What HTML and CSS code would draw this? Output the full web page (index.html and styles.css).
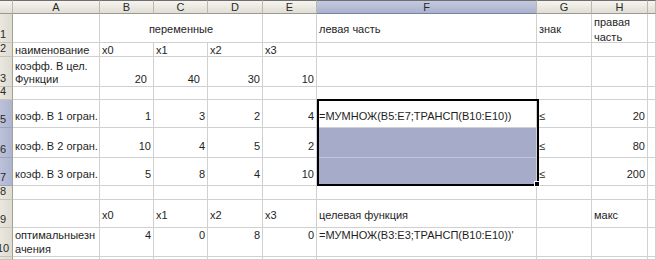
FILE: index.html
```html
<!DOCTYPE html>
<html lang="ru">
<head>
<meta charset="utf-8">
<title>Лист</title>
<link rel="stylesheet" href="styles.css">
</head>
<body>
<div class="sheet">
  <div class="row hd">
    <div class="c corner"></div>
    <div class="c">A</div>
    <div class="c">B</div>
    <div class="c">C</div>
    <div class="c">D</div>
    <div class="c">E</div>
    <div class="c sel">F</div>
    <div class="c">G</div>
    <div class="c">H</div>
    <div class="c"></div>
  </div>
  <div class="row r1">
    <div class="c rh"><span>1</span></div>
    <div class="c"></div>
    <div class="c span3">переменные</div>
    <div class="c"></div>
    <div class="c">левая часть</div>
    <div class="c">знак</div>
    <div class="c wrap">правая часть</div>
    <div class="c"></div>
  </div>
  <div class="row r2">
    <div class="c rh"><span>2</span></div>
    <div class="c">наименование</div>
    <div class="c">x0</div>
    <div class="c">x1</div>
    <div class="c">x2</div>
    <div class="c">x3</div>
    <div class="c"></div>
    <div class="c"></div>
    <div class="c"></div>
    <div class="c"></div>
  </div>
  <div class="row r3">
    <div class="c rh"><span>3</span></div>
    <div class="c wrap">коэфф. В цел. Функции</div>
    <div class="c n pr-b">20</div>
    <div class="c n pr-c">40</div>
    <div class="c n">30</div>
    <div class="c n">10</div>
    <div class="c"></div>
    <div class="c"></div>
    <div class="c"></div>
    <div class="c"></div>
  </div>
  <div class="row r4">
    <div class="c rh"><span>4</span></div>
    <div class="c"></div>
    <div class="c"></div>
    <div class="c"></div>
    <div class="c"></div>
    <div class="c"></div>
    <div class="c"></div>
    <div class="c"></div>
    <div class="c"></div>
    <div class="c"></div>
  </div>
  <div class="row r5">
    <div class="c rh sel"><span>5</span></div>
    <div class="c">коэф. В 1 огран.</div>
    <div class="c n">1</div>
    <div class="c n">3</div>
    <div class="c n">2</div>
    <div class="c n">4</div>
    <div class="c active">=МУМНОЖ(B5:E7;ТРАНСП(B10:E10))<div class="selbox"><div class="handle"></div></div></div>
    <div class="c">≤</div>
    <div class="c n">20</div>
    <div class="c"></div>
  </div>
  <div class="row r6">
    <div class="c rh sel"><span>6</span></div>
    <div class="c">коэф. В 2 огран.</div>
    <div class="c n">10</div>
    <div class="c n">4</div>
    <div class="c n">5</div>
    <div class="c n">2</div>
    <div class="c fsel"></div>
    <div class="c">≤</div>
    <div class="c n">80</div>
    <div class="c"></div>
  </div>
  <div class="row r7">
    <div class="c rh sel"><span>7</span></div>
    <div class="c">коэф. В 3 огран.</div>
    <div class="c n">5</div>
    <div class="c n">8</div>
    <div class="c n">4</div>
    <div class="c n">10</div>
    <div class="c fsel"></div>
    <div class="c">≤</div>
    <div class="c n">200</div>
    <div class="c"></div>
  </div>
  <div class="row r8">
    <div class="c rh"><span>8</span></div>
    <div class="c"></div>
    <div class="c"></div>
    <div class="c"></div>
    <div class="c"></div>
    <div class="c"></div>
    <div class="c"></div>
    <div class="c"></div>
    <div class="c"></div>
    <div class="c"></div>
  </div>
  <div class="row r9">
    <div class="c rh"><span>9</span></div>
    <div class="c"></div>
    <div class="c">x0</div>
    <div class="c">x1</div>
    <div class="c">x2</div>
    <div class="c">x3</div>
    <div class="c">целевая функция</div>
    <div class="c"></div>
    <div class="c">макс</div>
    <div class="c"></div>
  </div>
  <div class="row r10">
    <div class="c rh"><span>10</span></div>
    <div class="c wrap">оптимальныезн<br>ачения</div>
    <div class="c n">4</div>
    <div class="c n">0</div>
    <div class="c n">8</div>
    <div class="c n">0</div>
    <div class="c">=МУМНОЖ(B3:E3;ТРАНСП(B10:E10))'</div>
    <div class="c"></div>
    <div class="c"></div>
    <div class="c"></div>
  </div>
  <div class="row r11">
    <div class="c rh"><span>11</span></div>
    <div class="c"></div>
    <div class="c"></div>
    <div class="c"></div>
    <div class="c"></div>
    <div class="c"></div>
    <div class="c"></div>
    <div class="c"></div>
    <div class="c"></div>
    <div class="c"></div>
  </div>
</div>
</body>
</html>
```

FILE: styles.css
```css
* { box-sizing: border-box; }
html, body { margin: 0; height: 100%; }
body {
  background: #fff;
  font-family: "Liberation Sans", Arial, sans-serif;
  font-size: 11px;
  color: #1e1e1e;
  overflow: hidden;
}
.sheet {
  display: grid;
  grid-template-columns: 13px 87px 54px 54px 55px 54px 220px 55px 56px 8px;
  grid-template-rows: 14px 29px 14px 30px 13px 28px 30px 28px 14px 28px 29px 3px;
  width: 656px;
  height: 260px;
  overflow: hidden;
}
.row { display: contents; }
.c {
  display: flex;
  align-items: flex-end;
  padding: 0 2px;
  border-right: 1px solid #d0d0d0;
  border-bottom: 1px solid #d0d0d0;
  white-space: nowrap;
  line-height: 14px;
  min-width: 0;
}
.n { justify-content: flex-end; }
.span3 { grid-column: span 3; justify-content: center; }
.wrap { white-space: normal; }
.pr-b { padding-right: 6px; }
.pr-c { padding-right: 7px; }

/* header row */
.hd .c {
  background: linear-gradient(#f5f4ef, #e0ded4);
  border-top: 1px solid #6e6e6e;
  border-right: 1px solid #bbb9ad;
  border-bottom: 1px solid #9c9a8e;
  justify-content: center;
  align-items: center;
  color: #2a2a2a;
  line-height: 12px;
  padding: 0;
}
.hd .sel {
  background: linear-gradient(#c4cadf, #aab2cd);
  border-bottom-color: #7b829d;
}

/* row alignment */
.r1 .c { padding-bottom: 6px; }
.r1 .wrap { align-items: flex-start; padding-top: 1px; padding-bottom: 0; line-height: 14.5px; }
.r2 .c { line-height: 11px; }
.r3 .c { line-height: 13px; }
.r5 .c, .r6 .c, .r7 .c { padding-bottom: 4px; }
.r9 .c { padding-bottom: 5px; }
.r10 .c { align-items: flex-start; }

/* row headers */
.row .rh {
  background: linear-gradient(90deg, #e9e7de, #dedcd1);
  border-right: 1px solid #a3a195;
  border-bottom: 1px solid #c6c4b8;
  padding: 0 0 2px 0;
  align-items: flex-end;
  justify-content: flex-start;
  overflow: hidden;
  line-height: 12px;
  color: #2a2a2a;
}
.row .rh.sel {
  background: linear-gradient(90deg, #bcc2d9, #adb4cf);
  border-bottom-color: #9ca3bf;
}
.rh span {
  display: block;
  flex: none;
  width: 28px;
  margin-left: -11px;
  text-align: center;
}

/* selection */
.fsel {
  background: #a6abc9;
  border-bottom-color: #c3c6da;
}
.active {
  position: relative;
  overflow: visible;
}
.selbox {
  position: absolute;
  left: 0;
  top: -1px;
  width: 222px;
  height: 87px;
  border: 2px solid #000;
  z-index: 2;
  pointer-events: none;
}
.handle {
  position: absolute;
  right: -3px;
  bottom: -3px;
  width: 6px;
  height: 6px;
  background: #000;
  border: 1px solid #fff;
}
```
